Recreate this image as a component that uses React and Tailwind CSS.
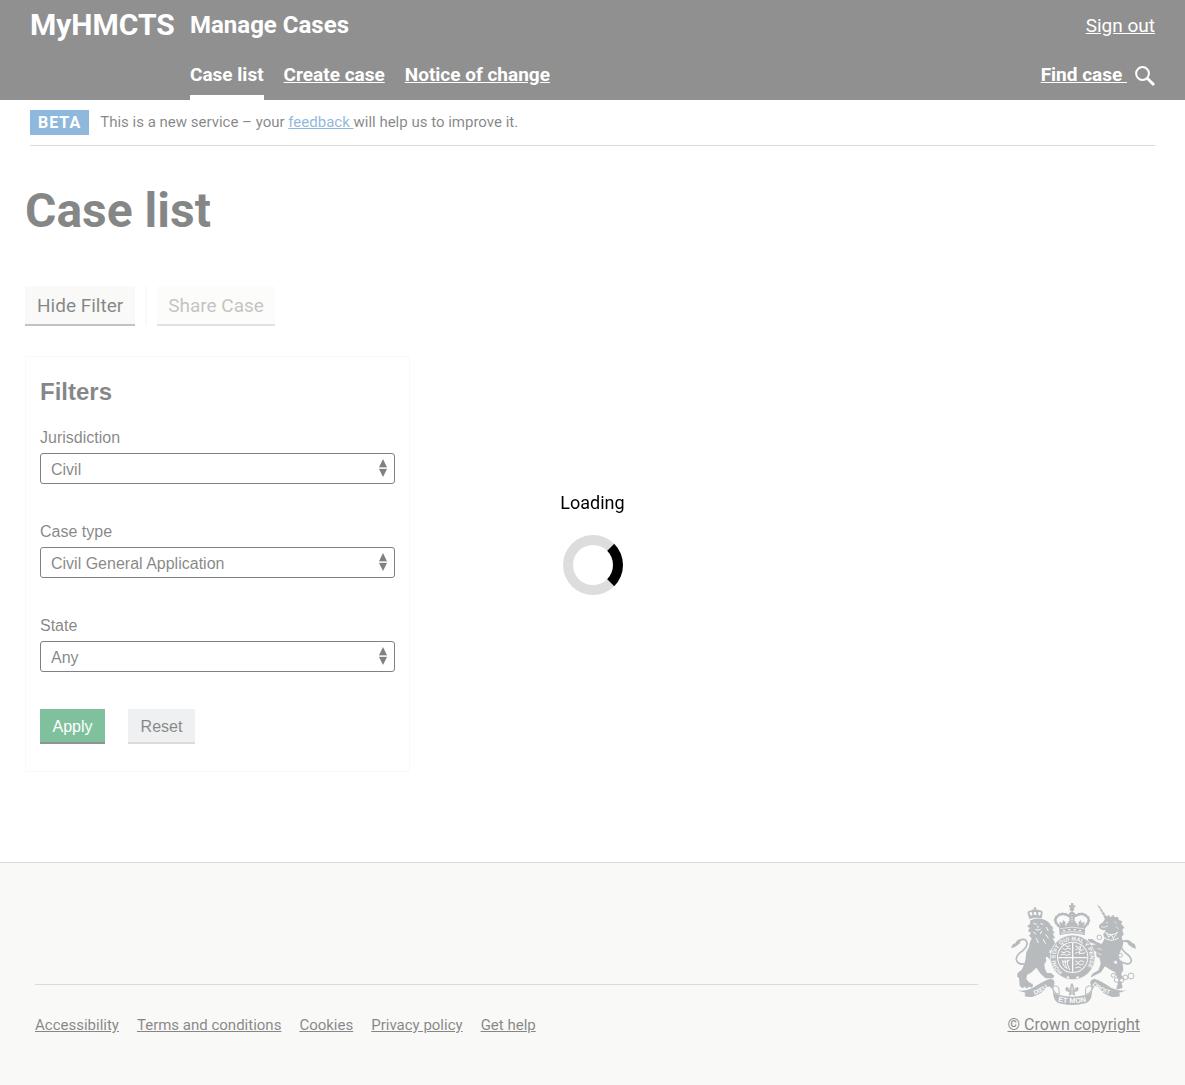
import React from "react";

const navLinks = ["Create case", "Notice of change"];
const footerLinks = ["Accessibility", "Terms and conditions", "Cookies", "Privacy policy", "Get help"];
const filters = [
  { id: "jurisdiction", label: "Jurisdiction", value: "Civil" },
  { id: "case-type", label: "Case type", value: "Civil General Application" },
  { id: "state", label: "State", value: "Any" },
];

function Crest() {
  return (
    <svg
      viewBox="36 24 375 306"
      className="h-[102px] w-[125px]"
      fill="#6e777b"
      stroke="none"
      role="img"
      aria-label="Royal coat of arms"
    >
      {/* lion's crown */}
      <path d="M91 72 L86 56 Q84 46 95 47 Q103 41 108 46 Q114 41 120 46 Q131 45 131 55 L128 70 Q110 65 91 72Z" />
      <circle cx="108" cy="41" r="4" />
      <path d="M91 54 Q94 50 98 52 L101 60 L95 62Z M104 51h7l2 9h-8z M117 52 Q124 49 126 54 L123 62 L118 60Z" fill="#f3f2f1" />
      {/* lion */}
      <path d="M94 76 Q112 67 132 73 Q148 78 155 90 L164 100 L159 102 L167 114 L161 116 L169 130 L161 130 L168 143 L178 149 L186 158 L178 163 L172 160 L176 168 L166 170 L156 163 L150 172 L166 180 L172 194 L164 202 L154 196 L146 186 L140 186 L142 198 L136 208 L138 222 L144 234 L156 234 L166 242 L162 250 L140 250 L126 238 L112 218 L98 232 L84 240 L82 252 L90 262 L102 268 L100 278 L90 275 L84 281 L78 275 L70 280 L62 272 L60 250 L54 244 L56 234 L68 224 L76 208 L80 190 L82 172 L90 156 L92 144 L98 130 L90 122 L96 114 L87 108 L92 99 L84 93 L93 87Z" />
      <path d="M103 85l10 3M124 86l9 2M117 92v8M109 103q9 6 16-1M104 110l6 8M128 108l-4 9M142 96l6 12M140 118l8 12M112 130l6 14M132 132l8 14" fill="none" stroke="#f3f2f1" strokeWidth="3" />
      <path d="M82 207 Q55 210 52 194 Q50 181 70 168 Q88 153 83 140 Q77 128 62 137 Q56 147 44 154" fill="none" stroke="#6e777b" strokeWidth="5" />
      <path d="M37 160 Q38 146 49 145 Q52 133 69 131 Q61 138 63 145 Q52 155 37 160Z" />
      {/* unicorn */}
      <path d="M294 28 L304 37 L326 68 L319 74Z" />
      <path d="M300 43l9-2M306 52l9-2M312 61l9-3" stroke="#f3f2f1" strokeWidth="2" />
      <path d="M320 68 L330 59 L334 67 L344 59 L346 66 L357 66 L360 75 L370 79 L367 88 L376 97 L370 105 L374 118 L368 126 L373 143 L370 157 L362 173 L360 190 L371 207 L373 225 L366 238 L374 250 L368 264 L371 279 L351 284 L357 264 L354 246 L348 232 L330 222 L318 214 L306 232 L290 240 L274 248 L280 236 L298 226 L305 206 L302 190 L292 184 L292 170 L276 164 L278 150 L292 148 L270 142 L266 132 L280 132 L292 140 L308 147 L316 133 L313 117 L320 106 L309 105 L300 98 L301 89 L312 82Z" />
      <path d="M316 110q20 18 41 1M313 126q22 18 46 3M323 114l6 13 8-9 6 13 10-15" fill="none" stroke="#f3f2f1" strokeWidth="3" />
      <path d="M320 82l7 2M306 95l9 2 12-4M346 78l6 8M352 94l6 9M294 160l14 4M296 174l12 6" fill="none" stroke="#f3f2f1" strokeWidth="2" />
      <path d="M362 198 Q391 214 396 201 Q401 189 380 174 Q362 158 366 145 Q371 134 386 140 Q396 151 404 156" fill="none" stroke="#6e777b" strokeWidth="5" />
      <path d="M410 162 Q411 146 400 144 Q393 134 380 134 Q388 140 387 148 Q396 157 410 162Z" />
      {/* chain */}
      <g fill="#f3f2f1" stroke="#6e777b" strokeWidth="3">
        <circle cx="301" cy="127" r="7" />
        <circle cx="343" cy="241" r="6" />
        <circle cx="353" cy="255" r="7" />
        <circle cx="368" cy="256" r="6" />
        <circle cx="379" cy="247" r="7" />
        <circle cx="396" cy="243" r="9" />
        <circle cx="364" cy="181" r="6" />
        <circle cx="350" cy="202" r="6" />
      </g>
      {/* royal crown */}
      <circle cx="219" cy="42" r="7" />
      <path d="M216 24h7v7h6v6h-6v8h-7v-8h-6v-6h6z" />
      <path d="M186 98 Q160 80 173 65 Q189 50 208 62 L219 52 L230 62 Q249 50 265 65 Q278 80 253 98" fill="none" stroke="#6e777b" strokeWidth="6" />
      <path d="M186 98 Q160 80 173 65 Q189 50 208 62 L219 52 L230 62 Q249 50 265 65 Q278 80 253 98" fill="none" stroke="#6e777b" strokeWidth="9" strokeLinecap="round" strokeDasharray="0 10" />
      <path d="M210 62 Q219 56 228 62 L224 96 H214Z" />
      <path d="M219 66v14" stroke="#f3f2f1" strokeWidth="3" strokeDasharray="3 3" />
      <path d="M186 96l-6-16 10 4 2-9 8 7-3 16zM204 96l-2-10 6-2v-6h5v18zM252 96l6-16-10 4-2-9-8 7 3 16zM234 96l2-10-6-2v-6h-5v18z" />
      <path d="M180 95 Q219 87 259 95 L257 121 Q219 109 182 121Z" />
      <path d="M184 101Q219 92 255 101M186 115Q219 104 253 115" fill="none" stroke="#f3f2f1" strokeWidth="2" />
      <path d="M192 107h6M208 104h6M224 104h6M240 107h6" stroke="#f3f2f1" strokeWidth="4" />
      {/* garter and shield */}
      <circle cx="221" cy="187" r="67" stroke="#f3f2f1" strokeWidth="2" />
      <circle cx="221" cy="187" r="47" fill="#f3f2f1" />
      <circle cx="221" cy="187" r="44" />
      <path id="garter-line" d="M191 231 A52 52 0 1 1 251 231" fill="none" />
      <text fill="#f3f2f1" fontFamily="Liberation Sans, sans-serif" fontWeight="bold" fontSize="17">
        <textPath href="#garter-line">HONI SOIT QUI MAL Y PENSE</textPath>
      </text>
      <path d="M221 144v86M178 188h86" stroke="#f3f2f1" strokeWidth="4" />
      <g fill="none" stroke="#f3f2f1" strokeWidth="3">
        <path d="M191 160l8 4 8-5 9 4M186 170l9 3 8-4 12 4M185 180l10-3 8 4 12-4M199 150l5 6 9-4" />
        <path d="M229 153l9 4 8-3M229 164l10-4 5 7 10-4M229 175l9-4 8 5 12-3M241 178l4-25" />
        <path d="M191 195q0 18 9 24M198 194q-1 17 7 28M205 194q-1 17 7 31M190 200q14 4 23-6" />
        <path d="M229 198l9 4 8-5 10 4M229 209l8-4 9 5 8-4M229 219l9-3 8 3" />
      </g>
      <path d="M204 245l6 4M232 249l7-4" stroke="#f3f2f1" strokeWidth="5" />
      {/* motto ribbon */}
      <path d="M54 286 Q78 290 102 278 Q134 257 154 251 Q171 254 165 270 L160 284 Q153 270 143 277 Q126 300 102 305 Q91 308 77 304 L79 293Z" />
      <path d="M384 286 Q360 290 336 278 Q306 257 286 251 Q270 254 275 270 L280 284 Q287 270 297 277 Q314 300 337 305 Q348 308 363 304 L361 293Z" />
      <path d="M160 277 Q163 298 181 300 Q219 310 259 300 Q277 298 281 277 L277 306 Q270 326 252 326 Q219 334 188 326 Q170 326 164 306Z" />
      <path d="M161 276 Q170 268 179 277 L181 298 Q165 296 161 276ZM280 276 Q270 268 261 277 L259 298 Q276 296 280 276Z" fill="#f3f2f1" stroke="#6e777b" strokeWidth="3" />
      <path id="dieu-line" d="M107 300 Q134 290 160 268" fill="none" />
      <path id="droit-line" d="M279 270 Q300 291 344 303" fill="none" />
      <path id="mon-line" d="M174 319 Q219 329 268 319" fill="none" />
      <g fill="#f3f2f1" fontFamily="Liberation Sans, sans-serif" fontWeight="bold" fontSize="19">
        <text><textPath href="#dieu-line">DIEU</textPath></text>
        <text><textPath href="#droit-line">DROIT</textPath></text>
        <text fontSize="22"><textPath href="#mon-line" startOffset="3">ET MON</textPath></text>
      </g>
      <path d="M219 264 Q228 275 223 284 Q236 269 239 281 Q238 291 226 290 L229 302 L219 298 L209 302 L212 290 Q199 291 199 281 Q203 269 215 284 Q210 275 219 264Z" />
      <path d="M219 273v24M207 281l5 5M231 281l-5 5" stroke="#f3f2f1" strokeWidth="2" />
    </svg>
  );
}

function FilterSelect({ id, label, value }) {
  return (
    <div className="mb-[35px]">
      <label htmlFor={id} className="mb-[3px] block leading-[25px]">{label}</label>
      <div className="relative">
        <select
          id={id}
          defaultValue={value}
          className="block h-[31px] w-full appearance-none rounded-[3px] border border-black bg-white px-2.5 pt-0.5 text-base"
        >
          <option>{value}</option>
        </select>
        <svg viewBox="0 0 8 18" className="pointer-events-none absolute top-1.5 right-2 h-[18px] w-2" fill="#000">
          <path d="M4 0 L8 8.2 H0Z M0 10 H8 L4 18Z" />
          <path d="M0 8.6H8V9.5H0Z" opacity=".3" />
        </svg>
      </div>
    </div>
  );
}

export default function App() {
  return (
    <div className="flex min-h-screen flex-col bg-white font-['Roboto',sans-serif] text-[#0b0c0c]">
      <header className="bg-[#212121] px-[30px] text-white">
        <div className="flex h-[50px] items-center">
          <a href="#" className="w-40 text-[30px] leading-[50px] font-bold">MyHMCTS</a>
          <a href="#" className="text-2xl leading-[50px] font-bold">Manage Cases</a>
          <a href="#" className="ml-auto pt-0.5 text-[19px] underline">Sign out</a>
        </div>
        <nav className="flex h-[50px] gap-5 pl-40 text-[19px] leading-[50px] font-bold">
          <a href="#" aria-current="page" className="border-b-5 border-white">Case list</a>
          {navLinks.map((l) => (
            <a key={l} href="#" className="underline">{l}</a>
          ))}
          <a href="#" className="ml-auto flex items-center gap-2">
            <span className="whitespace-pre underline">{"Find case "}</span>
            <svg viewBox="0 0 20 20" className="mt-0.5 h-5 w-5" fill="none" stroke="currentColor">
              <circle cx="7.5" cy="7.5" r="6.4" strokeWidth="2" />
              <path d="M12 12l7 7" strokeWidth="2.8" />
            </svg>
          </a>
        </nav>
      </header>

      <div className="mx-[30px] flex items-center border-b border-[#b1b4b6] py-2.5">
        <strong className="mr-[11px] bg-[#1d70b8] px-2 text-base leading-[25px] tracking-[1px] text-white">BETA</strong>
        <p className="text-[15px] leading-[25px]">
          This is a new service – your{" "}
          <a href="#" className="whitespace-pre text-[#1d70b8] underline">{"feedback "}</a>
          will help us to improve it.
        </p>
      </div>

      <main className="mb-[90px] px-[25px] pt-10">
        <h1 className="mb-[50px] text-5xl leading-[50px] font-bold">Case list</h1>
        <div className="flex h-10 text-[19px]">
          <button type="button" className="border-b-2 border-[#858688] bg-[#f3f2f1] px-3 pt-0.5">Hide Filter</button>
          <span className="mx-2.5 w-0.5 bg-[#f3f2f1]" />
          <button type="button" disabled className="border-b-2 border-[#858688] bg-[#f3f2f1] px-[11px] pt-0.5 opacity-50">Share Case</button>
        </div>
        <section className="mt-[30px] w-[385px] max-w-full border border-[#f3f2f1] px-3.5 pt-5 pb-[27px] font-['Liberation_Sans',sans-serif] text-base">
          <h2 className="mb-[18px] text-2xl leading-[30px] font-bold">Filters</h2>
          {filters.map((f) => (
            <FilterSelect key={f.id} {...f} />
          ))}
          <div className="mt-[37px] flex gap-[23px]">
            <button type="button" className="h-[35px] min-w-[65px] border-b-2 border-[#1a2a20] bg-[#00823b] px-3 pt-0.5 text-white">Apply</button>
            <button type="button" className="h-[35px] min-w-[67px] border-b-2 border-[#b4b6b8] bg-[#dee0e2] px-3 pt-0.5">Reset</button>
          </div>
        </section>
      </main>

      <footer className="flex grow items-end gap-[30px] border-t border-[#b1b4b6] bg-[#f3f2f1] pt-10 pr-[45px] pb-[50px] pl-[35px] text-[15px] leading-5">
        <ul className="flex grow flex-wrap gap-x-[18px] border-t border-[#b1b4b6] pt-[30px]">
          {footerLinks.map((l) => (
            <li key={l}><a href="#" className="underline">{l}</a></li>
          ))}
        </ul>
        <a href="#" className="flex flex-col items-center gap-2.5 text-base leading-5 underline">
          <Crest />
          © Crown copyright
        </a>
      </footer>

      <div role="status" className="fixed inset-0 flex flex-col items-center justify-center gap-5 bg-white/50 text-black">
        <span className="text-[18px] leading-[25px]">Loading</span>
        <div className="h-[60px] w-[60px] rounded-full border-10 border-[#dddddd] border-r-black" />
      </div>
    </div>
  );
}
